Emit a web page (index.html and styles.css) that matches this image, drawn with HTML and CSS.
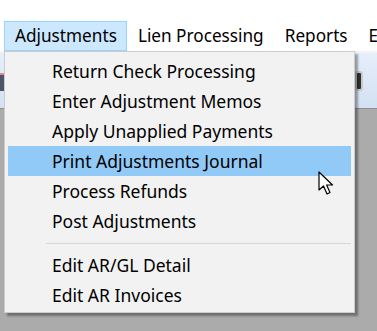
FILE: index.html
```html
<!DOCTYPE html>
<html lang="en">
<head>
  <meta charset="UTF-8">
  <title>Adjustments menu</title>
  <link rel="stylesheet" href="styles.css">
</head>
<body>
  <div class="window">
    <!-- top menu bar -->
    <ul class="menubar">
      <li class="menu-title open">Adjustments</li>
      <li class="menu-title">Lien Processing</li>
      <li class="menu-title">Reports</li>
      <li class="menu-title">E</li>
    </ul>
    <!-- toolbar under the menu, mostly hidden -->
    <div class="toolbar">
      <div class="tool-icon"></div>
      <div class="tool-box"></div>
    </div>
    <div class="workspace"></div>

    <!-- dropdown for Adjustments -->
    <ul class="dropdown">
      <li class="item">Return Check Processing</li>
      <li class="item">Enter Adjustment Memos</li>
      <li class="item">Apply Unapplied Payments</li>
      <li class="item active">Print Adjustments Journal</li>
      <li class="item">Process Refunds</li>
      <li class="item">Post Adjustments</li>
      <li class="sep"></li>
      <li class="item">Edit AR/GL Detail</li>
      <li class="item">Edit AR Invoices</li>
    </ul>

    <svg class="cursor" width="17" height="26" viewBox="0 0 17 26">
      <path d="M1 1 L1 19 L5.5 15 L9 23 L12 21.5 L8.6 14 L14.5 14 Z" fill="#fff" stroke="#000" stroke-width="1.2" stroke-linejoin="round"/>
    </svg>
  </div>
</body>
</html>
```

FILE: styles.css
```css
* {
  box-sizing: border-box;
}

body {
  margin: 0;
  background: #ababab;
  font-family: "Noto Sans", "Open Sans", sans-serif;
  color: #000;
}

ul {
  list-style: none;
  margin: 0;
  padding: 0;
}

.window {
  position: relative;
  width: 377px;
  height: 331px;
  overflow: hidden;
}

.menubar {
  display: flex;
  align-items: flex-end;
  height: 51px;
  padding-left: 4px;
  background: #fff;
}

.menu-title {
  height: 30px;
  line-height: 28px;
  padding: 0 9px 0 10px;
  font-size: 17.2px;
  border: 1px solid transparent;
  white-space: nowrap;
}

.menu-title.open {
  background: #cce8ff;
  border-color: #99d1ff;
}

.toolbar {
  position: relative;
  height: 58px;
  background: linear-gradient(to bottom, #e6eefa, #d3e1f2);
  border-top: 2px solid #f4f4f4;
  border-bottom: 1px solid #8f8f8f;
}

.tool-icon {
  position: absolute;
  left: 0;
  top: 20px;
  width: 5px;
  height: 18px;
  border-top: 2px solid #e08a8a;
  background: #4b5566;
}

.tool-box {
  position: absolute;
  left: 355px;
  top: 18px;
  width: 8px;
  height: 20px;
  background: #2f2f2f;
  border: 2px solid #c8c8c8;
  border-radius: 3px;
}

.workspace {
  height: 222px;
  background: #ababab;
}

.dropdown {
  position: absolute;
  left: 4px;
  top: 51px;
  width: 351px;
  padding: 4px 3px 2px 3px;
  background: #f2f2f2;
  border: 1px solid #cccccc;
  box-shadow: 3px 3px 2px rgba(0, 0, 0, 0.35);
}

.item {
  height: 30px;
  line-height: 31px;
  padding-left: 44px;
  font-size: 17.5px;
  white-space: nowrap;
}

.item.active {
  background: #91c9f7;
}

.sep {
  height: 1px;
  margin: 7px 0 6px 38px;
  background: #d7d7d7;
}

.cursor {
  position: absolute;
  left: 318px;
  top: 171px;
}
```
